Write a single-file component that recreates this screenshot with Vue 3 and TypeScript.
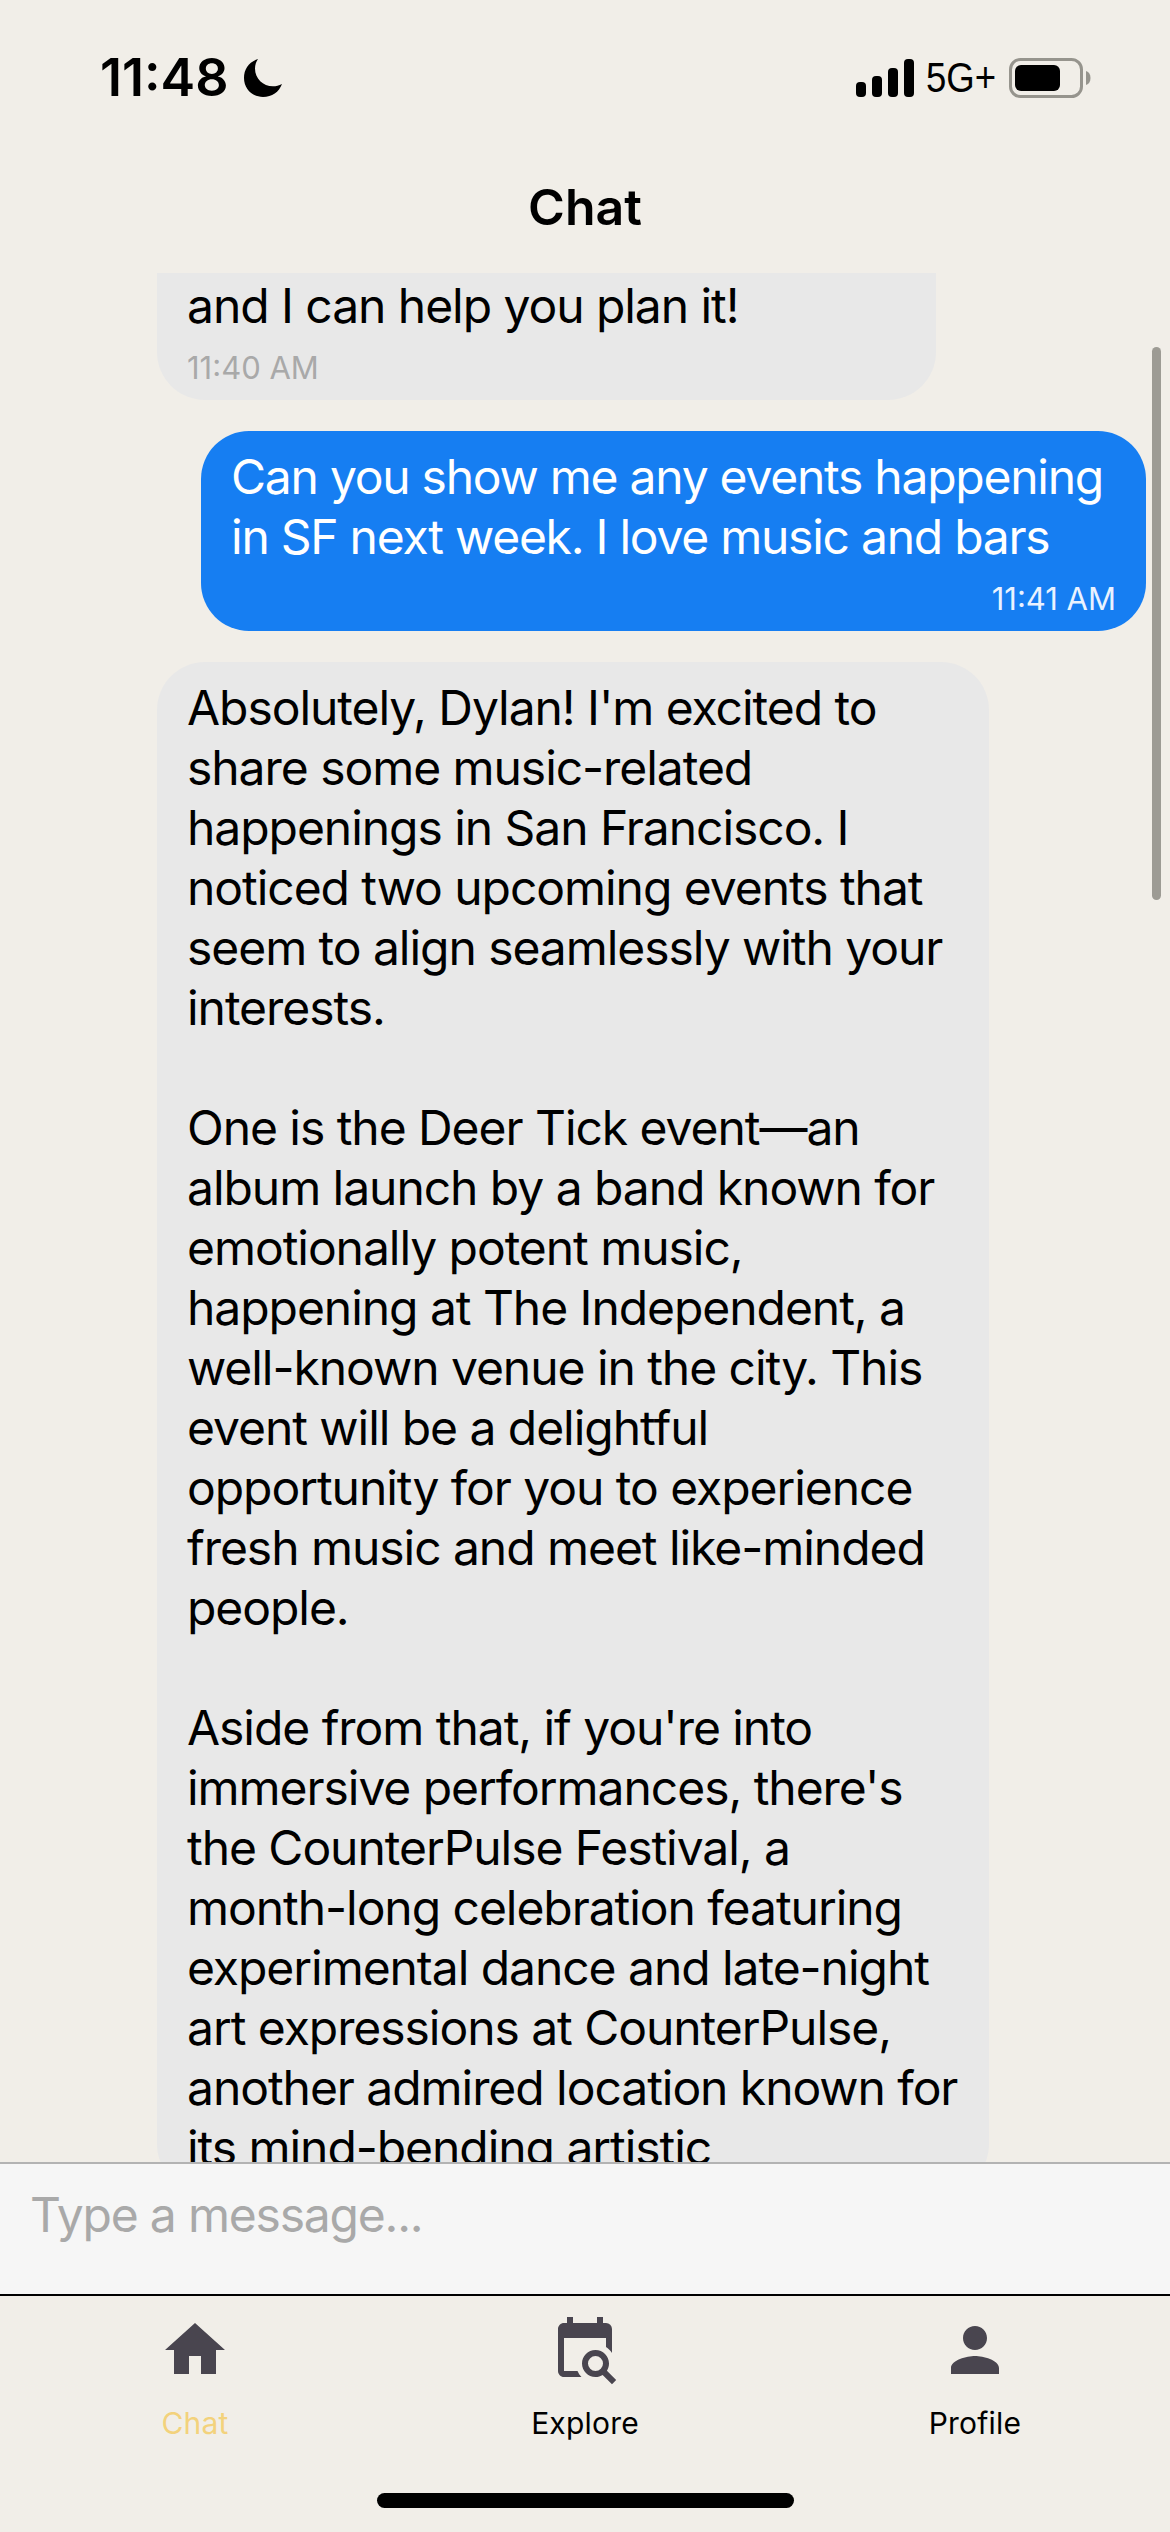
<script setup lang="ts">
interface Message {
  id: number
  from: 'bot' | 'me'
  width: number
  lines: string[]
  time?: string
}

const messages: Message[] = [
  { id: 1, from: 'bot', width: 779, lines: ['', 'and I can help you plan it!'], time: '11:40 AM' },
  {
    id: 2,
    from: 'me',
    width: 945,
    lines: ['Can you show me any events happening', 'in SF next week. I love music and bars'],
    time: '11:41 AM',
  },
  {
    id: 3,
    from: 'bot',
    width: 832,
    lines: [
      "Absolutely, Dylan! I'm excited to",
      'share some music-related',
      'happenings in San Francisco. I',
      'noticed two upcoming events that',
      'seem to align seamlessly with your',
      'interests.',
      '',
      'One is the Deer Tick event—an',
      'album launch by a band known for',
      'emotionally potent music,',
      'happening at The Independent, a',
      'well-known venue in the city. This',
      'event will be a delightful',
      'opportunity for you to experience',
      'fresh music and meet like-minded',
      'people.',
      '',
      "Aside from that, if you're into",
      "immersive performances, there's",
      'the CounterPulse Festival, a',
      'month-long celebration featuring',
      'experimental dance and late-night',
      'art expressions at CounterPulse,',
      'another admired location known for',
      'its mind-bending artistic',
    ],
  },
]

const tabs = [
  {
    label: 'Chat',
    active: true,
    d: 'M10 20v-6h4v6h5v-8h3L12 3 2 12h3v8z',
  },
  {
    label: 'Explore',
    active: false,
    d: 'M15.5,12C18,12 20,14 20,16.5C20,17.38 19.75,18.21 19.31,18.9L22.39,22L21,23.39L17.88,20.32C17.19,20.75 16.37,21 15.5,21C13,21 11,19 11,16.5C11,14 13,12 15.5,12M15.5,14A2.5,2.5 0 0,0 13,16.5A2.5,2.5 0 0,0 15.5,19A2.5,2.5 0 0,0 18,16.5A2.5,2.5 0 0,0 15.5,14M19,8H5V19H9.5C9.81,19.75 10.26,20.42 10.81,21H5C3.89,21 3,20.1 3,19V5C3,3.89 3.89,3 5,3H6V1H8V3H16V1H18V3H19A2,2 0 0,1 21,5V13.03C20.5,12.22 19.8,11.54 19,11.03V8Z',
  },
  {
    label: 'Profile',
    active: false,
    d: 'M12 12c2.21 0 4-1.79 4-4s-1.79-4-4-4-4 1.79-4 4 1.79 4 4 4zm0 2c-2.67 0-8 1.34-8 4v2h16v-2c0-2.66-5.33-4-8-4z',
  },
]
</script>

<template>
  <div class="screen">
    <header class="status">
      <div class="status-left">
        <span class="clock">11:48</span>
        <svg class="moon" viewBox="0 0 40 40" width="40" height="40" aria-hidden="true">
          <path d="M15 1C6 4 1 11 1 20c0 11 8.500 19 19 19 9 0 16-5 19-13-3 1.600-6 2.300-9 2.300C20 28.300 12 20.500 12 10.500 12 7 13 4 15 1z" />
        </svg>
      </div>
      <div class="status-right">
        <svg class="signal" viewBox="0 0 58 38" width="58" height="38" aria-hidden="true">
          <rect x="0" y="23" width="10" height="15" rx="4" />
          <rect x="16" y="17" width="10" height="21" rx="4" />
          <rect x="32" y="9" width="10" height="29" rx="4" />
          <rect x="48" y="0" width="10" height="38" rx="4" />
        </svg>
        <span class="network">5G+</span>
        <svg class="battery" viewBox="0 0 82 40" width="82" height="40" aria-hidden="true">
          <rect x="1.500" y="1.500" width="71" height="37" rx="10" fill="none" stroke="#96948d" stroke-width="3" />
          <rect x="6" y="7" width="45" height="26" rx="6" fill="#000" />
          <path d="M77 13c3 1 4.500 3.500 4.500 7s-1.500 6-4.500 7z" fill="#96948d" />
        </svg>
      </div>
    </header>

    <h1 class="title">Chat</h1>

    <main class="messages">
      <div class="scroller">
        <article
          v-for="message in messages"
          :key="message.id"
          class="bubble"
          :class="message.from === 'me' ? 'mine' : 'theirs'"
          :style="{ width: message.width + 'px' }"
        >
          <p class="text">
            <span v-for="(line, i) in message.lines" :key="i" class="line">{{ line || '\u00a0' }}</span>
          </p>
          <time v-if="message.time" class="stamp">{{ message.time }}</time>
        </article>
      </div>
      <div class="scrollbar"></div>
    </main>

    <div class="composer">
      <span class="placeholder">Type a message...</span>
    </div>

    <nav class="tabs">
      <div v-for="tab in tabs" :key="tab.label" class="tab">
        <svg class="tab-icon" viewBox="0 0 24 24" width="72" height="72" aria-hidden="true">
          <path :d="tab.d" />
        </svg>
        <span class="tab-label" :class="{ active: tab.active }">{{ tab.label }}</span>
      </div>
      <div class="home-indicator"></div>
    </nav>
  </div>
</template>

<style scoped>
.screen {
  width: 1170px;
  height: 2532px;
  display: flex;
  flex-direction: column;
  overflow: hidden;
  background: #f1eee8;
  color: #000;
  font-family: Inter, "Liberation Sans", sans-serif;
}
.status {
  height: 130px;
  flex: none;
  display: flex;
  justify-content: space-between;
  align-items: flex-start;
  padding: 58px 79px 0 100px;
  box-sizing: border-box;
}
.status-left {
  display: flex;
  align-items: center;
  gap: 15px;
}
.clock {
  font-size: 52px;
  line-height: 40px;
  font-weight: 600;
}
.status-right {
  display: flex;
  align-items: center;
  gap: 12px;
}
.network {
  display: inline-block;
  width: 69px;
  font-family: "Liberation Sans", sans-serif;
  font-size: 42px;
  line-height: 40px;
  white-space: nowrap;
  transform: scaleX(0.87);
  transform-origin: left center;
  margin-right: 2px;
}
.title {
  height: 143px;
  flex: none;
  margin: 0;
  font-size: 50px;
  font-weight: 600;
  line-height: 154px;
  text-align: center;
}
.messages {
  flex: 1;
  min-height: 0;
  position: relative;
  overflow: hidden;
}
.scroller {
  display: flex;
  flex-direction: column;
  gap: 31px;
  margin-top: -73px;
}
.bubble {
  box-sizing: border-box;
  border-radius: 48px;
  padding: 16px 30px 14px;
}
.theirs {
  align-self: flex-start;
  margin-left: 157px;
  background: #e8e8e8;
}
.mine {
  align-self: flex-end;
  margin-right: 24px;
  background: #167ef2;
  color: #fff;
  display: flex;
  flex-direction: column;
}
.text {
  margin: 0;
  font-size: 48px;
  line-height: 60px;
  letter-spacing: -1.05px;
}
.mine .text {
  letter-spacing: -1.25px;
}
.line {
  display: block;
  white-space: nowrap;
}
.stamp {
  display: block;
  font-size: 31px;
  line-height: 36px;
  margin-top: 14px;
  color: #a9a9a9;
}
.mine .stamp {
  align-self: flex-end;
  color: #e9f2ff;
}
.scrollbar {
  position: absolute;
  right: 9px;
  top: 74px;
  width: 9px;
  height: 553px;
  border-radius: 5px;
  background: #9d9b94;
}
.composer {
  flex: none;
  height: 134px;
  box-sizing: border-box;
  border-top: 2px solid #b3b3b3;
  border-bottom: 2px solid #000;
  background: #f6f6f6;
  padding: 29px 30px 0;
  font-size: 48px;
  line-height: 44px;
  letter-spacing: -1.2px;
}
.placeholder {
  color: #a9a9a9;
}
.tabs {
  flex: none;
  height: 236px;
  position: relative;
  display: grid;
  grid-template-columns: repeat(3, 390px);
  padding-top: 18px;
  box-sizing: border-box;
}
.tab {
  display: flex;
  flex-direction: column;
  align-items: center;
}
.tab-icon path {
  fill: #49454f;
}
.tab-label {
  margin-top: 18px;
  font-size: 30px;
  line-height: 38px;
  letter-spacing: 0.2px;
  color: #000;
}
.tab-label.active {
  color: #f3d27c;
}
.home-indicator {
  position: absolute;
  left: 377px;
  bottom: 24px;
  width: 417px;
  height: 15px;
  border-radius: 8px;
  background: #000;
}
</style>
